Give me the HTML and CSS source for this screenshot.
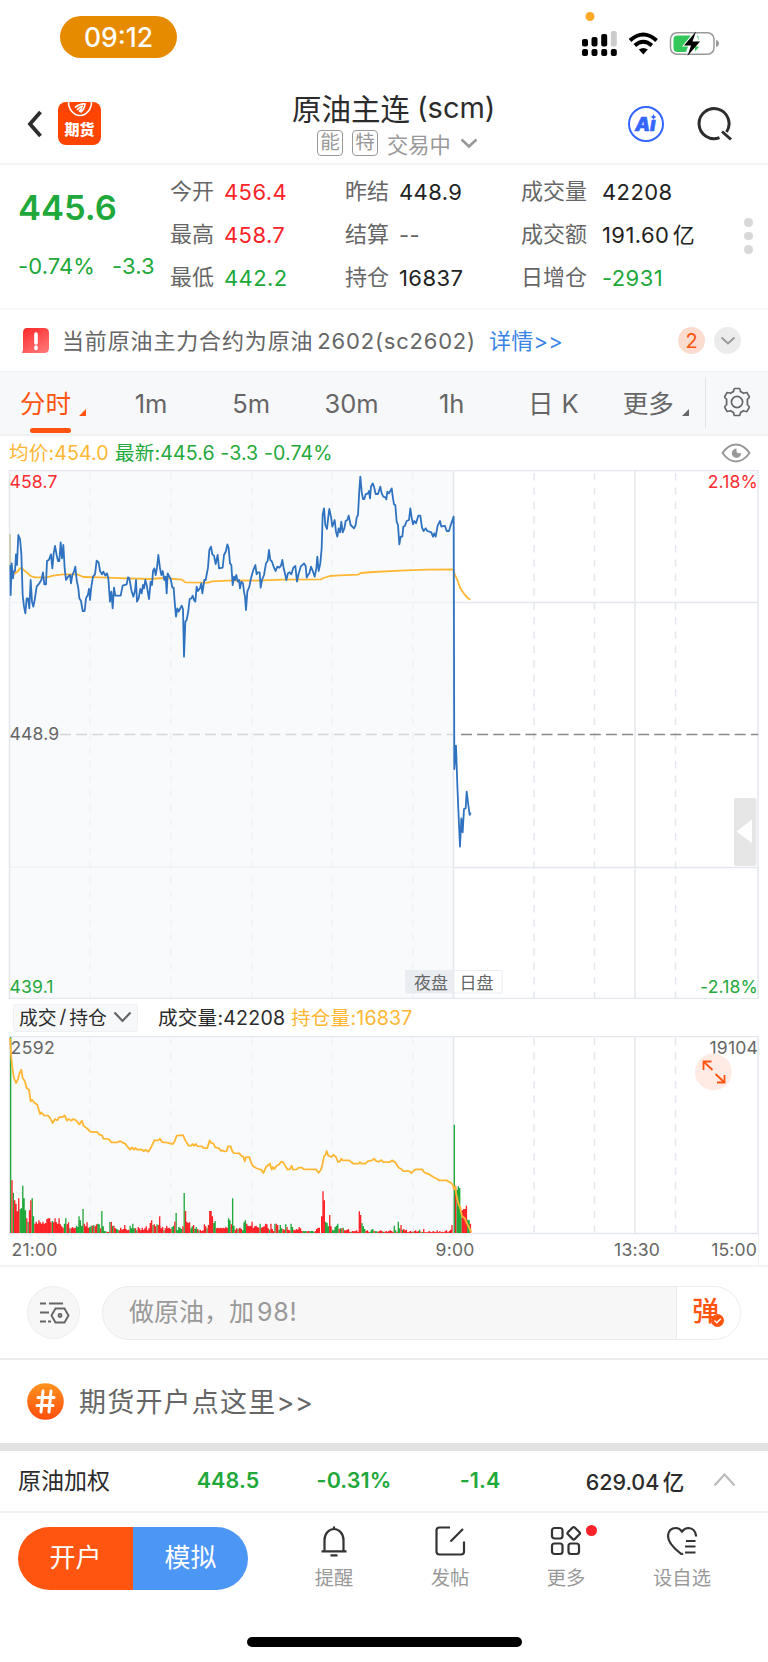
FILE: index.html
```html
<!DOCTYPE html>
<html lang="zh-CN">
<head>
  <meta charset="UTF-8" />
  <meta name="viewport" content="width=device-width, initial-scale=1.0"/>
  <title>原油主连(scm)</title>
  <link rel="stylesheet" href="styles.css">
</head>
<body>

  <div class="status">
    <span class="clock">09:12</span>
    <svg class="status-icons" width="148" height="60" viewBox="0 0 148 60">
      <circle cx="10" cy="8.500" r="4.500" fill="#ffa726"/>
      <g fill="#000">
        <rect x="2" y="31" width="6" height="7.500" rx="2"/>
        <rect x="11.500" y="29" width="6" height="9.500" rx="2"/>
        <rect x="21.200" y="26" width="6" height="12.500" rx="2"/>
        <rect x="30.800" y="23" width="6" height="15.500" rx="2" fill="#ccc"/>
        <rect x="2" y="41" width="6" height="7" rx="2"/>
        <rect x="11.500" y="41" width="6" height="7" rx="2"/>
        <rect x="21.200" y="41" width="6" height="7" rx="2"/>
        <rect x="30.800" y="41" width="6" height="7" rx="2"/>
        <path d="M58.800 41.500Q63.300 38.300 67.800 41.500L63.300 46.500Z"/>
      </g>
      <g fill="none" stroke="#000" stroke-width="4">
        <path d="M50 32.500Q63.300 20.500 76.600 32.500"/>
        <path d="M54.800 37.500Q63.300 30 71.800 37.500"/>
      </g>
      <rect x="90.500" y="24.700" width="43.500" height="21.600" rx="6.500" fill="none" stroke="#999" stroke-width="1.500"/>
      <path d="M136 32v7q3-1 3-3.500t-3-3.500z" fill="#999"/>
      <path d="M97.500 27.500H111l-9 11h6l-2 5.500h-8.500q-4 0-4-4v-8.500q0-4 4-4zM115 38l4 1-4 4.500zM117 27.500l1.500 1v4z" fill="#34c759"/>
      <path d="M116 23.500L104 37.500h7l-3.500 10.500L120 33.500h-7.500z"/>
    </svg>
  </div>

  <header class="topbar">
    <svg class="back" width="16" height="28" viewBox="0 0 16 28"><path d="M13.500 2L3 14l10.500 12"/></svg>
    <div class="app">
      <svg width="26" height="15" viewBox="0 0 26 15">
        <path d="M1.500 0a11.500 13.500 0 0 0 23 0" fill="none" stroke="#fff" stroke-width="1.600"/>
        <path d="M8 5.500q5-4 10-3.500-.5 5.500-4.500 8.500M10 8q3-3.500 6-4M12 9.500q2.500-2 3-4" fill="none" stroke="#fff" stroke-width="1.700"/>
      </svg>
      <b>期货</b>
    </div>
    <div class="title">
      <h1>原油主连<span>(scm)</span></h1>
      <p><i>能</i><i>特</i>交易中
        <svg width="18" height="11" viewBox="0 0 18 11"><path d="M1.500 1.500L9 8.500l7.500-7"/></svg>
      </p>
    </div>
    <svg class="ai" width="36" height="36" viewBox="0 0 36 36">
      <circle cx="18" cy="18" r="17" fill="none" stroke="#3366ff" stroke-width="2"/>
      <text x="7" y="24.500">A</text><text x="22" y="24.500">ı</text>
      <path d="M25.500 8l.9 2.100 2.100.9-2.100.9-.9 2.100-.9-2.100-2.100-.9 2.100-.9z" fill="#3366ff"/>
    </svg>
    <svg class="search-icon" width="36" height="36" viewBox="0 0 36 36">
      <path d="M22.500 31.600A15 15 0 1 1 29.500 26"/><path d="M25 25.500l9 8"/>
    </svg>
  </header>

  <section class="quote">
    <div class="last">
      <strong>445.6</strong>
      <p><span>-0.74%</span><span>-3.3</span></p>
    </div>
    <dl class="col-a">
      <dt>今开</dt><dd class="up">456.4</dd>
      <dt>最高</dt><dd class="up">458.7</dd>
      <dt>最低</dt><dd class="down">442.2</dd>
    </dl>
    <dl class="col-b">
      <dt>昨结</dt><dd>448.9</dd>
      <dt>结算</dt><dd class="none">--</dd>
      <dt>持仓</dt><dd>16837</dd>
    </dl>
    <dl class="col-c">
      <dt>成交量</dt><dd>42208</dd>
      <dt>成交额</dt><dd>191.60<span class="unit">亿</span></dd>
      <dt>日增仓</dt><dd class="down">-2931</dd>
    </dl>
    <div class="dots"><i></i><i></i><i></i></div>
  </section>

  <section class="notice">
    <svg width="27" height="26" viewBox="0 0 27 26">
      <defs><linearGradient id="red" x1="0" y1="0" x2=".6" y2="1"><stop offset="0" stop-color="#fb2626"/><stop offset="1" stop-color="#ff7070"/></linearGradient></defs>
      <path d="M5 0h17q5 0 5 5v15q0 5-5 5H0l1-3V5q0-5 4-5z" fill="url(#red)"/>
      <path d="M14 6v9M14 19v1.500" stroke="#fff" stroke-width="3.600" stroke-linecap="round"/>
    </svg>
    <p>当前原油主力合约为原油<span class="code">2602(sc2602)</span></p>
    <a>详情&gt;&gt;</a>
    <b class="count">2</b>
    <span class="fold"><svg width="16" height="10" viewBox="0 0 16 10"><path d="M1.500 1.500L8 7.500l6.500-6"/></svg></span>
  </section>

  <nav class="tabs">
    <span class="tab active">分时</span>
    <span class="tab">1m</span>
    <span class="tab">5m</span>
    <span class="tab">30m</span>
    <span class="tab">1h</span>
    <span class="tab day">日<em>K</em></span>
    <span class="tab more">更多</span>
    <span class="gear">
      <svg width="30" height="30" viewBox="0 0 30 30">
        <path d="M11.500 4.500Q12 1.500 12.500 1.500h5q.5 0 1 3l3 1.700q3-1 3.400-.7l2.500 4.300q.2.600-2 2.500v5.400q2.200 2 2 2.500l-2.500 4.300q-.4.400-3.400-.7l-3 1.700q-.5 3-1 3h-5q-.5 0-1-3l-3-1.700q-3 1-3.400.7L2.600 20.200q-.2-.5 2-2.500v-5.400q-2.200-1.900-2-2.500l2.500-4.300q.4-.3 3.400.7z"/>
        <circle cx="15" cy="15" r="5.600"/>
      </svg>
    </span>
  </nav>

  <div class="legend">
    <span class="avg">均价:454.0</span>
    <span class="now">最新:445.6 -3.3 -0.74%</span>
    <svg width="30" height="20" viewBox="0 0 30 20">
      <path d="M1.500 10Q7.500 1.500 15 1.500T28.500 10Q22.500 18.500 15 18.500T1.500 10z" fill="none" stroke="#999" stroke-width="2"/>
      <path d="M15.500 5.500a4.700 4.700 0 1 0 4.700 4.700h-2.200a2.500 2.500 0 0 1-2.500-2.500z" fill="#999"/>
    </svg>
  </div>

  <!-- precio -->
  <svg class="chart" width="768" height="529" viewBox="0 0 768 529">
    <rect x="10" y="1" width="443" height="527" fill="#f8fafc"/>
    <path class="grid soft" d="M10 132.500H453"/>
    <path class="grid soft" d="M10 397H453"/>
    <path class="grid" d="M453 132.500H758M453 397.500H758"/>
    <path class="dash soft" d="M90 3V528M170.700 3V528M251.700 3V528M332.300 3V528M413 3V528"/>
    <path class="dash" d="M534 3V528M594.500 3V528M675.500 3V528"/>
    <path class="grid" d="M453.500 1V528M635 1V528"/>
    <path class="frame" d="M9.500 .5H758V528.500H9.500z"/>
    <path d="M60 264.500H453" stroke="#d4d6d8" stroke-width="1.500" stroke-dasharray="11 5.100"/>
    <path d="M461 264.500H758" stroke="#888" stroke-width="1.500" stroke-dasharray="11 5.100"/>
    <g class="lines" transform="translate(0 -5) scale(.33333)">
      <polyline class="yellow" points="30,320 45,325 52,320 60,310 66,309 74,318 84,325 92,333 104,337 140,337 160,332 190,328 232,328 250,336 300,337 380,340 450,342 490,339 546,344 556,352 625,353 636,349 700,346 767,347 850,344 964,343 970,339 990,333 1020,331 1074,329 1082,324 1120,321 1200,317 1280,314 1360,313 1363,325 1372,345 1381,370 1392,386 1402,398 1411,404"/>
      <path d="M30 207L31 300" stroke="#c9c9ae"/>
      <polyline class="blue" points="31,300 32,390 35,295 39,340 41,320 45,318 48,268 51,300 55,210 60,222 64,265 68,390 72,425 76,445 80,400 84,400 88,430 92,345 96,410 100,425 104,405 110,365 118,355 124,345 129,322 133,358 138,358 141,288 147,284 153,268 157,310 161,265 165,243 170,270 174,288 178,288 182,232 186,280 190,240 194,310 198,345 204,335 210,330 213,355 217,330 222,320 226,305 230,345 235,370 238,400 243,408 248,438 254,438 258,400 264,388 267,372 270,405 274,365 279,335 285,328 290,287 296,293 300,318 306,328 310,320 316,332 321,325 325,340 330,410 334,380 338,430 342,368 346,392 362,392 368,362 380,358 384,337 388,340 394,375 400,395 405,378 408,345 411,410 416,400 421,372 425,385 429,360 432,370 436,345 440,360 447,402 452,350 456,360 459,318 463,310 467,330 471,308 475,270 480,310 484,330 488,318 493,345 497,335 500,385 503,325 508,335 512,342 517,368 521,368 524,410 528,455 532,430 536,440 540,432 545,422 549,432 552,575 556,470 560,465 565,438 569,402 574,400 578,392 582,405 586,410 590,365 594,378 600,370 604,355 607,385 613,345 617,345 624,308 628,255 633,245 637,268 642,272 647,297 653,270 657,310 668,308 672,270 678,258 682,238 686,250 690,295 694,300 698,360 702,335 705,345 709,330 713,350 717,345 720,370 724,350 729,355 732,380 735,395 738,435 742,380 748,365 753,340 760,315 766,300 770,328 774,322 779,322 782,368 786,345 792,330 798,295 803,288 807,255 811,285 816,290 822,308 827,318 832,305 838,308 843,302 847,285 851,310 856,330 859,345 864,325 869,322 874,328 880,308 886,303 891,350 895,330 902,305 912,295 917,303 920,338 924,330 928,325 933,305 939,320 944,335 949,310 952,275 956,318 961,295 965,250 968,150 972,130 976,180 981,192 985,155 988,132 993,155 997,185 1004,165 1008,200 1012,215 1016,190 1020,202 1024,170 1028,202 1033,190 1037,168 1042,165 1046,152 1052,180 1062,190 1067,180 1070,158 1074,150 1078,75 1081,35 1085,80 1089,102 1093,102 1097,88 1104,85 1107,78 1110,100 1113,65 1118,55 1122,65 1127,87 1134,87 1141,65 1145,85 1150,95 1156,97 1159,103 1162,80 1167,85 1175,70 1179,100 1182,118 1186,120 1190,170 1194,180 1198,238 1202,215 1207,215 1210,185 1215,182 1220,168 1227,165 1231,130 1235,158 1239,178 1243,168 1248,175 1255,152 1261,152 1266,188 1271,198 1277,190 1282,198 1288,200 1294,202 1299,215 1303,205 1307,215 1313,182 1320,168 1324,185 1330,183 1335,183 1340,198 1347,198 1353,178 1361,155 1363,912 1368,842 1372,960 1377,1080 1380,1145 1384,1060 1388,1102 1392,1032 1397,1030 1400,980 1405,1020 1409,1050 1412,1043"/>
    </g>
    <g class="labels">
      <text x="9.500" y="17.500" fill="#fb2b30">458.7</text>
      <text x="758" y="17.500" text-anchor="end" fill="#fb2b30">2.18%</text>
      <text x="9.500" y="270" fill="#666">448.9</text>
      <text x="9.500" y="522.500" fill="#24a93c">439.1</text>
      <text x="758" y="522.500" text-anchor="end" fill="#24a93c">-2.18%</text>
    </g>
    <rect x="405" y="500" width="48.500" height="23.500" fill="#e9edf2"/>
    <rect x="454" y="500.500" width="48" height="22.500" fill="#fff" stroke="#e9edf3"/>
    <g class="session"><text x="414" y="518.500">夜盘</text><text x="459.500" y="518.500">日盘</text></g>
    <rect x="734" y="328" width="22.500" height="68" rx="2" fill="#e6e6e6"/>
    <path d="M736.500 361.500L752 349.500V373z" fill="#fff"/>
  </svg>

  <div class="volbar">
    <span class="pick">成交<s>/</s>持仓
      <svg width="19" height="12" viewBox="0 0 19 12"><path d="M1.500 1.500l8 8.500 8-8.500"/></svg>
    </span>
    <span class="vol">成交量:42208</span>
    <span class="open">持仓量:16837</span>
  </div>

  <!-- volumen -->
  <svg class="chart" width="768" height="229" viewBox="0 0 768 229">
    <rect x="10" y="1" width="443" height="197" fill="#f8fafc"/>
    <path class="dash soft" d="M90 2V197M170.700 2V197M251.700 2V197M332.300 2V197M413 2V197"/>
    <path class="dash" d="M534 2V197M594.500 2V197M675.500 2V197"/>
    <path class="grid" d="M453.500 1V197M635 1V197"/>
    <path class="frame" d="M9.500 .5H758V197.500H9.500z"/>
    <path d="M758.500 198v32" stroke="#eef0f3"/>
    <g transform="translate(0 -56.300) scale(.33333)">
      <path id="volDown" fill="#20a83a"/>
      <path id="volUp" fill="#fb2328"/>
    </g>
    <g class="lines" transform="translate(0 -56.300) scale(.33333)">
      <polyline class="yellow" points="30,175 33,225 37,265 42,295 48,310 54,298 58,282 64,270 68,295 74,303 80,325 87,330 92,365 96,360 104,370 112,375 120,403 124,398 132,407 145,408 152,418 158,430 165,418 172,422 178,412 188,412 194,407 201,423 206,418 214,423 220,418 228,422 238,434 246,423 250,437 262,447 270,456 292,457 298,465 306,467 310,477 326,478 334,488 352,488 360,484 366,488 375,491 380,498 390,510 396,503 402,510 406,505 412,510 427,510 431,515 437,510 445,516 452,505 463,482 475,482 480,477 486,487 502,489 518,493 524,485 530,468 549,466 556,482 566,498 574,498 578,493 582,498 588,493 592,499 606,500 610,505 622,505 629,482 634,490 640,491 646,503 656,505 664,514 668,512 672,515 680,514 684,500 692,500 697,515 702,520 718,521 726,530 730,530 734,545 738,532 748,532 752,545 758,558 768,565 776,568 784,570 790,580 798,562 810,552 815,570 819,562 823,568 830,558 838,554 843,546 850,548 858,562 863,570 870,568 875,558 879,570 890,569 896,564 906,564 912,569 948,569 956,579 963,570 968,552 972,530 977,525 980,514 985,528 995,532 1000,525 1008,532 1014,547 1020,545 1024,537 1028,542 1048,542 1060,552 1076,552 1080,547 1084,552 1096,552 1104,544 1116,542 1122,537 1128,544 1136,546 1144,541 1150,547 1170,547 1176,542 1186,548 1196,564 1204,568 1210,574 1228,574 1234,580 1240,574 1246,569 1266,569 1274,579 1286,583 1300,592 1310,597 1318,602 1340,602 1352,609 1358,615 1362,628 1365,620 1370,650 1376,675 1380,682 1386,710 1394,715 1400,730 1408,745 1414,758"/>
    </g>
    <g class="labels" fill="#666">
      <text x="10.500" y="18" class="wide">2592</text>
      <text x="758" y="18" text-anchor="end">19104</text>
    </g>
    <circle cx="713.500" cy="36" r="18.500" fill="#ffebe4"/>
    <path d="M703.500 34v-8.500h8M704 26l8.500 8M715.500 38l8.500 8M717 46.500h7.500V39" fill="none" stroke="#ff5410" stroke-width="1.800"/>
    <g class="labels" fill="#666">
      <text x="11.500" y="220">21:00</text>
      <text x="455" y="220" text-anchor="middle">9:00</text>
      <text x="637" y="220" text-anchor="middle">13:30</text>
      <text x="757" y="220" text-anchor="end">15:00</text>
    </g>
  </svg>

  <section class="comment">
    <span class="settings">
      <svg width="32" height="26" viewBox="0 0 32 26">
        <path d="M2 3.500h6M11 3.500h14M2 12.500h9M2 21.500h6M10 21.500h3"/>
        <path d="M17.500 8.500h9l4 7-4 7h-9l-4-7z"/><circle cx="22" cy="15.500" r="1.500"/>
      </svg>
    </span>
    <div class="field">
      <span>做原油，加<em>98!</em></span>
      <b>弹<svg width="13" height="13" viewBox="0 0 13 13"><circle cx="6.500" cy="6.500" r="6.500" fill="#ff5410"/><path d="M3.500 6.500l2.300 2.300 4-4" fill="none" stroke="#fff" stroke-width="1.400"/></svg></b>
    </div>
  </section>

  <section class="promo">
    <svg width="37" height="37" viewBox="0 0 37 37">
      <defs><linearGradient id="orange" x1="0" y1="0" x2="0" y2="1"><stop offset="0" stop-color="#ff931e"/><stop offset="1" stop-color="#ff4d0d"/></linearGradient></defs>
      <circle cx="18.500" cy="18.500" r="18.300" fill="url(#orange)"/>
      <path d="M16 8l-2 21M24 8l-2 21M11 14.500h16M10 22.500h16" stroke="#fff" stroke-width="3" stroke-linecap="round"/>
    </svg>
    <p>期货开户点这里<em>&gt;&gt;</em></p>
  </section>

  <section class="index">
    <span class="name">原油加权</span>
    <b>448.5</b>
    <b>-0.31%</b>
    <b>-1.4</b>
    <strong>629.04<span class="unit">亿</span></strong>
    <svg width="23" height="14" viewBox="0 0 23 14"><path d="M1.500 12.500l10-11 10 11"/></svg>
  </section>

  <footer class="bottom">
    <div class="trade"><span>开户</span><span>模拟</span></div>
    <div class="item">
      <svg width="32" height="32" viewBox="0 0 32 32"><path d="M16 1.500v3M6.500 26V15a9.500 11 0 0 1 19 0v11M3.500 26.300h25M12.500 30.300h7"/></svg>
      <span>提醒</span>
    </div>
    <div class="item">
      <svg width="32" height="32" viewBox="0 0 32 32"><path d="M16 2.500H5.500q-3 0-3 3v21q0 3 3 3h21.500q3 0 3-3V16.500M16.500 16.500L29 4"/></svg>
      <span>发帖</span>
    </div>
    <div class="item">
      <svg width="32" height="32" viewBox="0 0 32 32">
        <rect x="2" y="3" width="10.500" height="10.500" rx="2.500"/><rect x="2" y="18.500" width="10.500" height="10.500" rx="2.500"/><rect x="18.500" y="18.500" width="10.500" height="10.500" rx="2.500"/>
        <path d="M22.700 2.500q1-1 2 0l4.800 4.800q1 1 0 2l-4.800 4.800q-1 1-2 0l-4.800-4.800q-1-1 0-2z"/>
      </svg>
      <span>更多</span>
      <i class="dot"></i>
    </div>
    <div class="item">
      <svg width="32" height="32" viewBox="0 0 32 32"><path d="M17 28.500q-1.500 1-3-.5Q2 18.500 2 11 2.500 3 10 3q3.500 0 6 3.500Q18.500 3 22.500 3q6.500.5 7.500 7.500v1M20 16h9.500M19 21.500h10.500M19 27.500h10.500"/></svg>
      <span>设自选</span>
    </div>
  </footer>

  <div class="home-bar"></div>

  <script>
    // one bar per minute: [first x, colour + height ...]
    const volume = [
      [30, "g588 r158 g120 r98 r88 r65 r104 g72 g74 g142 g104 g68 r44 g33 r68 r98 g104 g50 r28 r34 r28 r38 r32 r28 r34 r28 r30 r42 r44 r44 r32 g36 r32 r44 r32 r28 r44 r26 r20 r16 g28 g44 r26 r32 g14 r14 r18 r14 r16 g22"],
      [231, "g18 g50 g38 g22 g72 r28 r20 r32 r16 g18 g22 r22 g24 r20 r26 g28 g26 r14 g66 g20 g6 g5 r3 r4 g33 r33 g22 r22 r14 g12 g10 r8 r16 r10 r12 r24 r12 r8 r10 g22 g14 g28 g14 r14 g8 r18 r14 r8 r16 r10 r14 r20 r8 r14 r30 r38 g24 r26 r20 g26 r24 r50"],
      [478, "r20 r14 r18 g8 r14 r22 r14 r16 r12 g18 g22 r34 g60 g8 g18 g16 g12 r20 g120 r66 r34 r30 r32 g14 g20 r24 g12 g18 r12 g8 r10 r6 r8 r26 r20 g14 r24 r66 r66 r50 g30 g36 r14 r16 r14 r16 r14 r16 r14 r18 r16 g44 g38 r26 g104 g22 r10 r14 g12 r14"],
      [718, "r16 r12 g8 g32 g38 r28 r22 r20 r22 r34 r16 r20 r22 r18 r16 g28 r16 r18 r20 r28 r26 r14 g10 r28 r12 r6 g28 r28 r24 g10 g24 g14 r12 r10 g26 r18 r10 r8 g28 g18 r10 r8 r12 r10 r18 r14 r6 g6 g5 g6 r5 r6 g5 g6 g6 g4 r6 r12 r16 r16"],
      [963, "r50 r125 r98 g34 g30 g20 r54 r20 g10 g8 g18 g22 g28 r12 g14 r14 g16 r8 r8 r10 r12 r4 g4 r6 r5 r6 r8 r4 r65 r54 g30 g20 g12 r6 r8 r4 g4 g10 g12 r6 g5 g5 r4 r6 r8 r5 g4 r4 r6 r4 r6 r8 r6 r4 g22 g8 r4 g34 g14 r24 g10 r12 r8 r10 r2 r4 r6 r4 g4 r6"],
      [1245, "r8 r4 r6 g10 r4 g2 r12 r2 r2 r2 r6 r4 r2 r6 r4 r2 r8 r2 r6 r2 r4 r2 r6 r8 r2 r6 r10 r24"],
      [1361, "g325 r142 g130 g140 g135 g70 r68 r72 r72 r82 g40 g38 r28"]
    ];
    const paths = { g: "", r: "" };
    volume.forEach(([start, bars]) => {
      bars.split(" ").forEach((bar, i) => {
        const x = (start + i * 4.035).toFixed(1);
        paths[bar[0]] += `M${x} 760v-${bar.slice(1)}h4v${bar.slice(1)}z`;
      });
    });
    document.getElementById("volDown").setAttribute("d", paths.g);
    document.getElementById("volUp").setAttribute("d", paths.r);
  </script>
</body>
</html>
```
FILE: styles.css
```css
* {
  box-sizing: border-box;
}
body {
  font-family: Inter, 'Noto Sans CJK SC', sans-serif;
  background: #fff;
  color: #2b2b2b;
  margin: 0;
  width: 768px;
  height: 1662px;
  overflow: hidden;
}
h1, p, dl, dd {
  margin: 0;
  font-weight: 400;
}
i, em, s {
  font-style: normal;
  text-decoration: none;
}
svg {
  display: block;
  flex: none;
}
.status {
  display: flex;
  height: 84px;
  padding: 8px 0 0 60px;
}
.clock {
  width: 117px;
  height: 42px;
  margin-top: 8px;
  border-radius: 21px;
  background: #e68a00;
  color: #fff;
  font-size: 26.5px;
  font-weight: 500;
  line-height: 43px;
  text-align: center;
}
.status-icons {
  margin-left: 403px;
}
.topbar {
  display: flex;
  align-items: flex-start;
  height: 81px;
  padding-left: 27px;
  border-bottom: 2px solid #f4f4f4;
}
.back {
  margin-top: 26px;
}
.back path {
  fill: none;
  stroke: #2d2d30;
  stroke-width: 3.8;
}
.app {
  display: flex;
  flex-direction: column;
  align-items: center;
  width: 43px;
  height: 43px;
  margin: 18px 0 0 15px;
  border-radius: 8px;
  background: #ff4400;
  color: #fff;
}
.app b {
  font-size: 15px;
  font-weight: 900;
  line-height: 26px;
}
.title {
  width: 240px;
  margin-left: 191px;
}
.title h1 {
  display: flex;
  align-items: center;
  height: 44px;
  margin-top: 1px;
  font-size: 29.5px;
  white-space: nowrap;
}
.title h1 span {
  margin-left: 7px;
  font-size: 29px;
}
.title p {
  display: flex;
  align-items: center;
  height: 26px;
  margin-top: 1px;
  padding-left: 25px;
  color: #999;
  font-size: 21.3px;
}
.title i {
  width: 26px;
  height: 26px;
  margin-right: 9px;
  border: 1.5px solid #999;
  border-radius: 4px;
  font-size: 19.5px;
  line-height: 22px;
  text-align: center;
}
.title p svg {
  margin-left: 9px;
}
.title p path {
  fill: none;
  stroke: #999;
  stroke-width: 2.6;
}
.ai {
  margin: 22px 0 0 96px;
}
.ai text {
  fill: #3366ff;
  stroke: #3366ff;
  stroke-width: .5;
  font-size: 19px;
  font-style: italic;
  font-weight: 900;
}
.search-icon {
  margin: 22px 0 0 33px;
  fill: none;
  stroke: #2d2d30;
  stroke-width: 3;
}
.quote {
  display: flex;
  height: 145px;
  padding-left: 18px;
  border-bottom: 2px solid #f7f7f7;
  font-size: 22px;
}
.last {
  width: 152px;
  color: #20a83a;
}
.last strong {
  display: block;
  height: 42px;
  margin-top: 22px;
  font-size: 34.5px;
  font-weight: 600;
  line-height: 42px;
}
.last p {
  display: flex;
  gap: 17px;
  margin-top: 23px;
  line-height: 28px;
  font-size: 22px;
  letter-spacing: .1px;
  white-space: nowrap;
}
.quote dl {
  display: grid;
  grid-template-columns: 53px auto;
  grid-auto-rows: 43.2px;
  align-content: start;
  justify-content: start;
  align-items: center;
  padding-top: 5px;
  white-space: nowrap;
}
.col-a {
  width: 175px;
}
.col-b {
  width: 176px;
}
.quote .col-c {
  width: 220px;
  grid-template-columns: 80px auto;
}
.quote dt {
  color: #666;
  line-height: 30px;
  padding-bottom: 2px;
}
.quote dd {
  padding-left: 1px;
  color: #222;
  line-height: 30px;
  letter-spacing: .4px;
}
.quote .up {
  color: #fb2328;
}
.quote .down {
  color: #20a83a;
}
.quote .none {
  color: #666;
}
.unit {
  margin-left: 3.5px;
}
.dots {
  display: flex;
  flex-direction: column;
  gap: 5px;
  padding-top: 53px;
  margin-left: 3px;
}
.dots i {
  width: 8.5px;
  height: 8.5px;
  border-radius: 50%;
  background: #d8d8d8;
}
.notice {
  display: flex;
  align-items: center;
  height: 61px;
  padding-left: 22px;
  font-size: 22px;
}
.notice p {
  margin-left: 13px;
  padding-bottom: 3px;
  width: 427px;
  color: #666;
  letter-spacing: .85px;
  white-space: nowrap;
}
.code {
  margin-left: 4px;
  letter-spacing: .8px;
}
.notice a {
  color: #3a84e8;
  width: 189px;
  padding-bottom: 3px;
  letter-spacing: .2px;
}
.count, .fold {
  display: flex;
  align-items: center;
  justify-content: center;
  width: 27px;
  height: 27px;
  border-radius: 50%;
  background: #fbdccf;
  color: #ff5410;
  font-size: 20px;
  font-weight: 400;
}
.fold {
  margin-left: 9px;
  background: #ececec;
}
.fold path {
  fill: none;
  stroke: #999;
  stroke-width: 2;
}
.tabs {
  display: flex;
  height: 65px;
  padding-left: 20px;
  border-top: 1px solid #eef0f2;
  border-bottom: 2px solid #f0f1f2;
  background: #f7f8fa;
  color: #666;
  font-size: 25.5px;
  line-height: 63px;
}
.tab {
  position: relative;
  width: 100.2px;
  text-align: center;
}
.tab.active {
  width: 81px;
  color: #ff5410;
  text-align: left;
}
.tab.active::before {
  content: "";
  position: absolute;
  left: 10px;
  bottom: 1px;
  width: 41px;
  height: 5.5px;
  border-radius: 3px;
  background: #ff5410;
}
.tab.active::after, .more::after {
  content: "";
  position: absolute;
  left: 59px;
  top: 37px;
  border-left: 7px solid transparent;
  border-bottom: 7px solid currentColor;
}
.day em {
  margin-left: 8px;
}
.tab.day {
  width: 103px;
}
.tab.more {
  width: 82px;
  margin-left: 18px;
  text-align: left;
}
.gear {
  height: 51px;
  margin-top: 5px;
  padding: 10px 0 0 16px;
  border-left: 1px solid #e2e4e7;
}
.gear svg {
  fill: none;
  stroke: #666;
  stroke-width: 1.7;
}
.legend {
  display: flex;
  align-items: center;
  height: 34px;
  padding-left: 9px;
  font-size: 19.6px;
  letter-spacing: .1px;
  white-space: nowrap;
}
.legend span {
  padding-bottom: 3px;
}
.avg {
  width: 106px;
  color: #ffb733;
}
.now {
  width: 606px;
  color: #24a93c;
}
.grid, .frame, .dash {
  fill: none;
  stroke: #e4e8ee;
  stroke-width: 1.5;
}
.dash {
  stroke-dasharray: 7.2;
}
.soft {
  stroke: #f0f2f5;
}
.lines {
  fill: none;
  stroke-width: 5.4;
  stroke-linejoin: round;
}
.yellow {
  stroke: #ffb733;
}
.blue {
  stroke: #2f72bf;
}
.labels {
  font-size: 17.6px;
  letter-spacing: .15px;
}
.wide {
  letter-spacing: .4px;
}
.session {
  fill: #666;
  font-size: 17px;
}
.volbar {
  display: flex;
  align-items: center;
  height: 37px;
  padding-left: 13px;
  font-size: 19.6px;
  letter-spacing: .2px;
  white-space: nowrap;
}
.pick {
  display: flex;
  align-items: center;
  width: 125px;
  height: 28px;
  padding: 0 0 3px 5px;
  border: 1px solid #eff1f4;
  border-radius: 3px;
  background: #f7f8fa;
  font-size: 18.8px;
  letter-spacing: 0;
}
.pick s {
  margin: 0 3px;
}
.pick svg {
  margin: 2px 0 0 6px;
}
.pick path {
  fill: none;
  stroke: #666;
  stroke-width: 2.2;
}
.vol {
  width: 133px;
  margin-left: 20px;
}
.vol, .open {
  padding-bottom: 3px;
}
.open {
  color: #ffb733;
}
.comment {
  display: flex;
  align-items: center;
  height: 95px;
  padding-left: 27px;
  border-top: 2px solid #f4f4f4;
  border-bottom: 2px solid #ececec;
}
.settings {
  display: flex;
  align-items: center;
  justify-content: center;
  width: 53px;
  height: 53px;
  border: 1px solid #eee;
  border-radius: 50%;
  background: #f7f7f7;
}
.settings svg {
  fill: none;
  stroke: #666;
  stroke-width: 1.9;
}
.field {
  display: flex;
  align-items: center;
  width: 639px;
  height: 54px;
  margin-left: 22px;
  border: 1px solid #ececec;
  border-radius: 27px;
  background: #f7f7f7;
  color: #999;
  font-size: 25px;
  overflow: hidden;
}
.field span {
  width: 575px;
  padding: 0 0 5px 26px;
}
.field em {
  margin-left: 3px;
  letter-spacing: .8px;
}
.field b {
  position: relative;
  height: 54px;
  width: 64px;
  padding-left: 15px;
  border-left: 1px solid #ececec;
  background: #fff;
  color: #ff5410;
  font-size: 27px;
  font-weight: 500;
  line-height: 51px;
}
.field b svg {
  position: absolute;
  left: 34px;
  top: 28px;
}
.promo {
  display: flex;
  align-items: center;
  height: 83px;
  padding-left: 27px;
  color: #666;
  font-size: 27px;
  letter-spacing: 1.2px;
}
.promo p {
  margin-left: 15px;
  padding-bottom: 2px;
}
.promo em {
  letter-spacing: .8px;
}
.index {
  display: flex;
  align-items: center;
  height: 70px;
  padding: 0 0 2px 18px;
  border-top: 8px solid #e2e2e2;
  border-bottom: 2px solid #f1f1f1;
  font-size: 21.5px;
  white-space: nowrap;
}
.index .name {
  width: 152px;
  padding-bottom: 3px;
  font-size: 23px;
}
.index b {
  width: 116px;
  color: #20a83a;
  font-weight: 600;
  letter-spacing: .1px;
  text-align: center;
}
.index b:nth-of-type(2) {
  width: 136px;
}
.index strong {
  width: 148px;
  margin-left: 23px;
  text-align: center;
  font-weight: 500;
}
.index svg {
  margin-left: 4px;
  fill: none;
  stroke: #bbb;
  stroke-width: 2.2;
}
.bottom {
  display: flex;
  height: 124px;
  padding: 14px 0 0 18px;
}
.trade {
  display: flex;
  width: 230px;
  height: 63px;
  margin-right: 28px;
  border-radius: 32px;
  overflow: hidden;
  background: linear-gradient(90deg, #ff5510 50%, #4c96f6 50%);
  color: #fff;
  font-size: 26px;
  line-height: 62px;
  text-align: center;
}
.trade span {
  flex: 1;
}
.item {
  position: relative;
  display: flex;
  flex-direction: column;
  align-items: center;
  width: 116px;
  color: #999;
  font-size: 19.3px;
  line-height: 28px;
}
.item svg {
  margin: -2px 0 7px;
  fill: none;
  stroke: #333;
  stroke-width: 2.2;
}
.dot {
  position: absolute;
  left: 78px;
  top: -2px;
  width: 11px;
  height: 11px;
  border-radius: 50%;
  background: #fb2328;
}
.home-bar {
  width: 275px;
  height: 10px;
  margin-left: 247px;
  border-radius: 5px;
  background: #000;
}
```
